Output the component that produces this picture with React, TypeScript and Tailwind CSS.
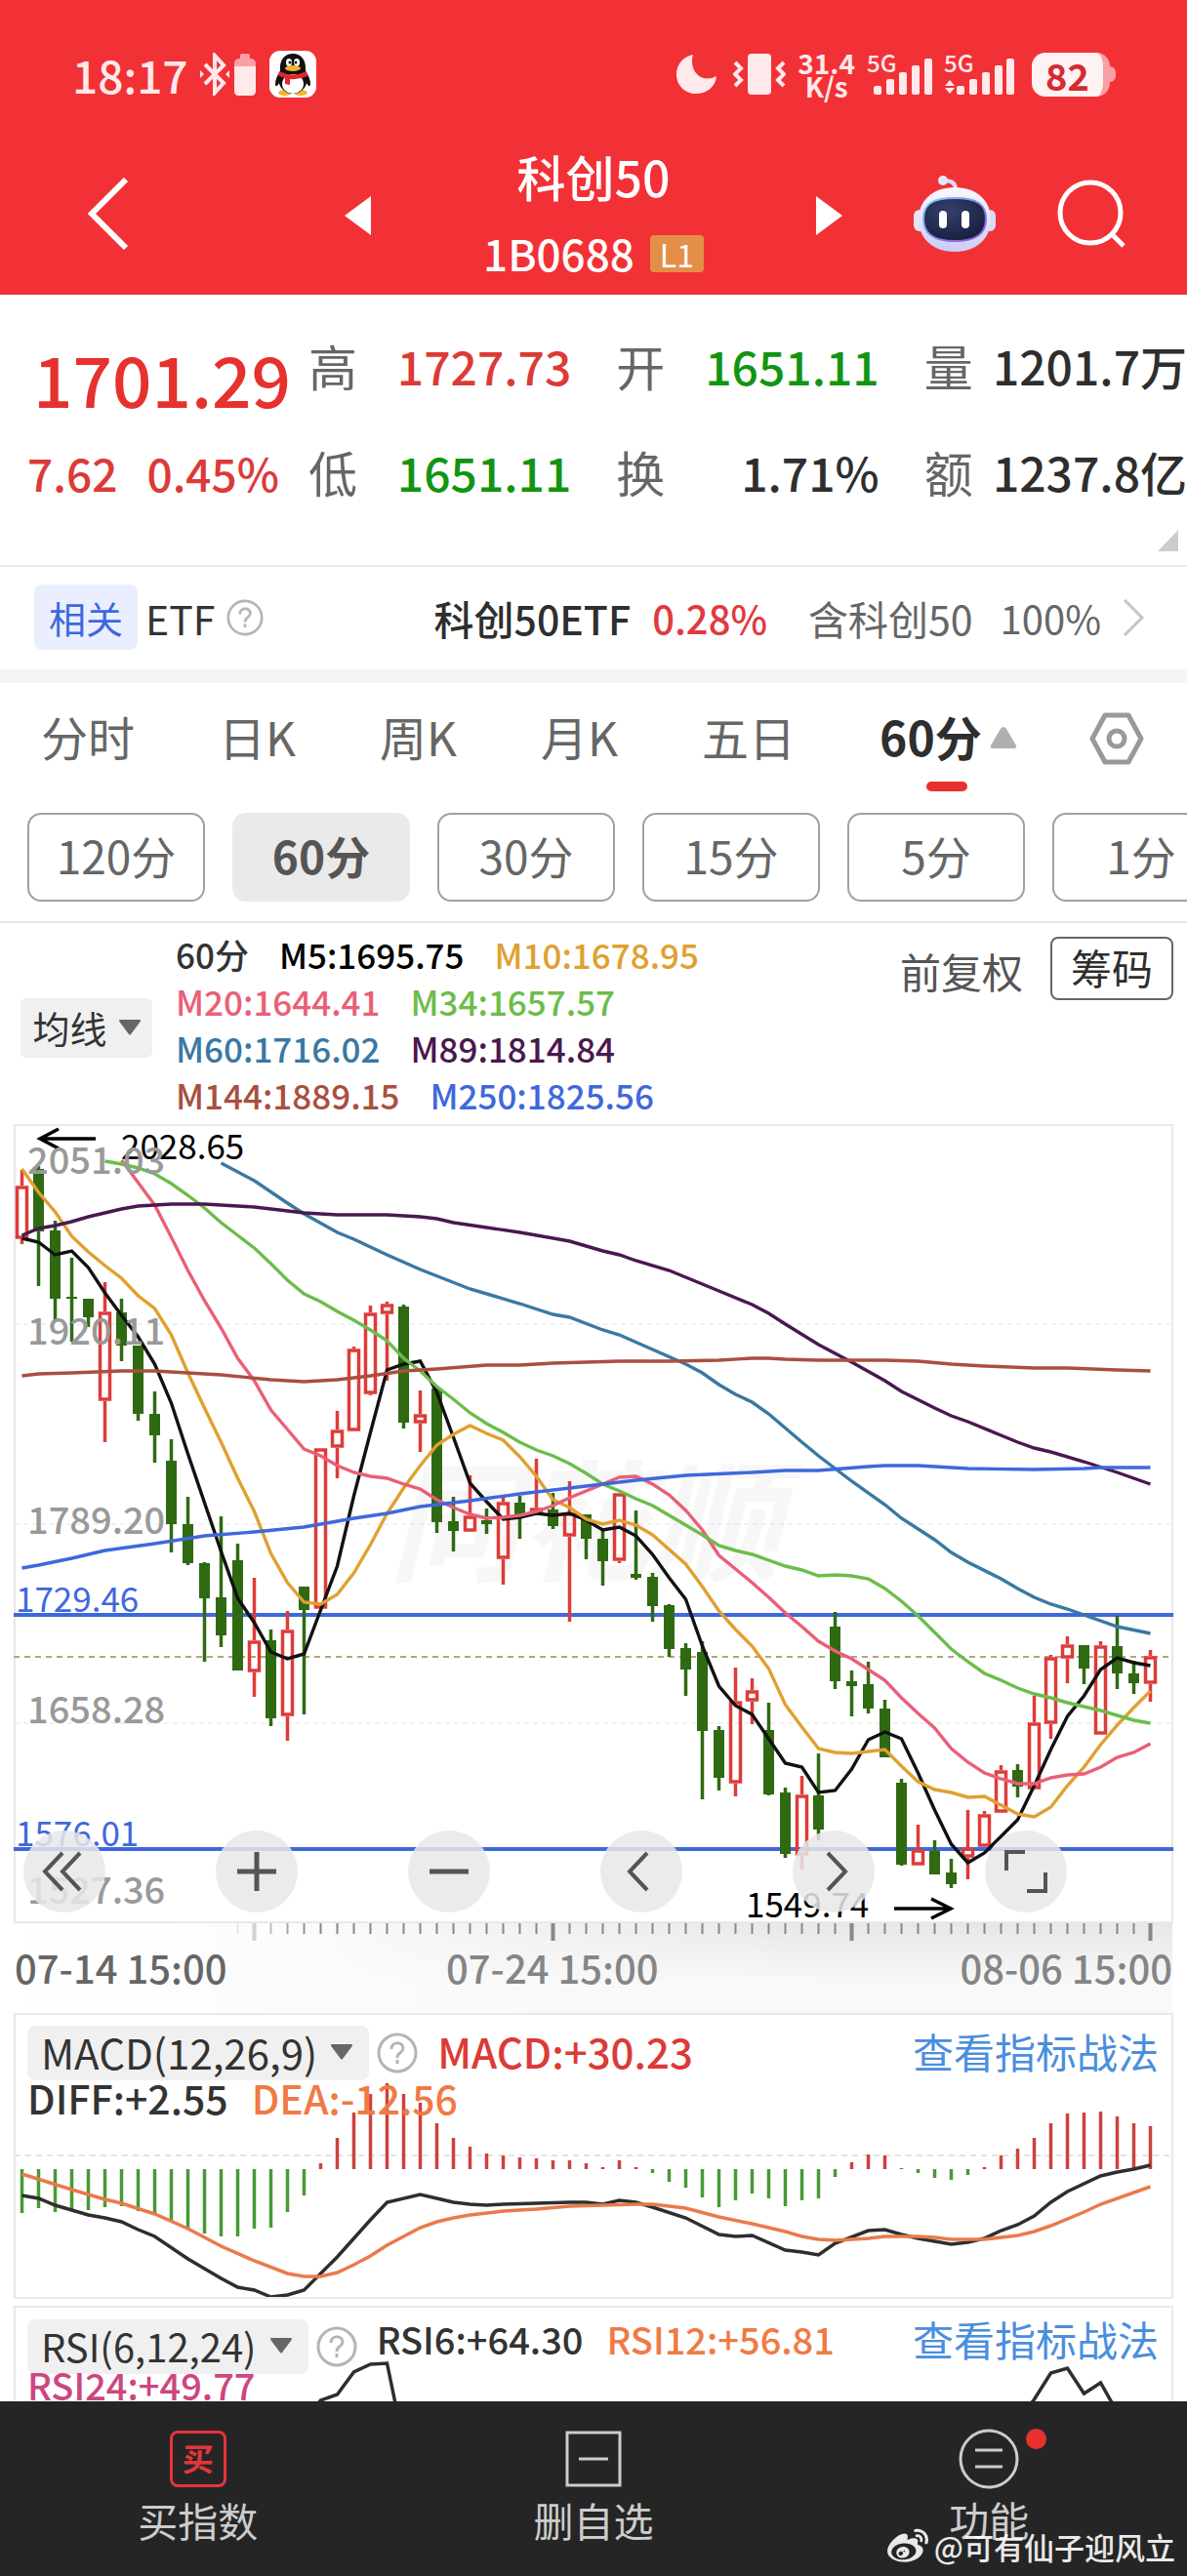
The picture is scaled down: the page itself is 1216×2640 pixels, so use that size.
import type { ReactNode } from 'react';
import { FaWeibo } from 'react-icons/fa6';

type Point = [number, number];
type Candle = ['r' | 'g', number, number, number, number];

const STEP = 17;
const x = (i: number) => 22.5 + i * STEP;

const toPoints = (pts: Point[]) => pts.map(([i, y]) => `${x(i)},${y}`).join(' ');
const dense = (start: number, ys: number[]): Point[] => ys.map((y, i) => [start + i, y]);

// direction, high, body top, body bottom, low
const candles: Candle[] = [
  ['r', 1199, 1215, 1270, 1275], ['g', 1195, 1198, 1262, 1318], ['g', 1251, 1261, 1331, 1354],
  ['g', 1289, 1329, 1331, 1375], ['g', 1331, 1331, 1350, 1360], ['r', 1314, 1344, 1436, 1478],
  ['g', 1331, 1345, 1379, 1395], ['g', 1379, 1379, 1449, 1456], ['g', 1426, 1449, 1471, 1499],
  ['g', 1475, 1497, 1562, 1591], ['g', 1534, 1562, 1602, 1604], ['g', 1601, 1602, 1638, 1703],
  ['g', 1554, 1637, 1676, 1688], ['g', 1582, 1599, 1712, 1712], ['r', 1617, 1681, 1714, 1739],
  ['g', 1670, 1681, 1761, 1769], ['r', 1651, 1670, 1759, 1784], ['g', 1626, 1626, 1650, 1757],
  ['r', 1484, 1484, 1649, 1649], ['r', 1446, 1465, 1484, 1515], ['r', 1380, 1382, 1467, 1467],
  ['r', 1338, 1345, 1429, 1430], ['r', 1334, 1336, 1347, 1415], ['g', 1337, 1339, 1458, 1464],
  ['r', 1425, 1449, 1459, 1488], ['g', 1423, 1423, 1560, 1571], ['g', 1534, 1559, 1569, 1590],
  ['r', 1512, 1553, 1570, 1570], ['g', 1546, 1558, 1562, 1572], ['r', 1532, 1539, 1598, 1624],
  ['g', 1533, 1540, 1552, 1577], ['r', 1495, 1545, 1550, 1551], ['g', 1530, 1547, 1564, 1567],
  ['r', 1518, 1550, 1575, 1662], ['g', 1552, 1552, 1577, 1598], ['g', 1568, 1577, 1600, 1625],
  ['r', 1530, 1530, 1600, 1602], ['g', 1548, 1613, 1617, 1619], ['g', 1612, 1616, 1646, 1662],
  ['g', 1644, 1645, 1690, 1698], ['g', 1684, 1689, 1711, 1738], ['g', 1682, 1693, 1774, 1844],
  ['g', 1769, 1773, 1822, 1835], ['r', 1709, 1743, 1828, 1841], ['r', 1720, 1732, 1744, 1767],
  ['g', 1745, 1773, 1839, 1840], ['g', 1832, 1837, 1900, 1904], ['r', 1820, 1839, 1902, 1916],
  ['g', 1797, 1840, 1875, 1886], ['g', 1652, 1667, 1723, 1731], ['g', 1712, 1723, 1728, 1759],
  ['g', 1703, 1726, 1751, 1756], ['g', 1742, 1751, 1801, 1801], ['g', 1823, 1827, 1911, 1912],
  ['r', 1870, 1895, 1912, 1912], ['g', 1886, 1897, 1921, 1921], ['g', 1905, 1919, 1931, 1935],
  ['r', 1855, 1893, 1904, 1926], ['r', 1856, 1859, 1893, 1893], ['r', 1809, 1814, 1858, 1858],
  ['g', 1808, 1814, 1831, 1842], ['r', 1738, 1765, 1834, 1834], ['r', 1696, 1698, 1767, 1782],
  ['r', 1677, 1685, 1700, 1725], ['g', 1686, 1686, 1710, 1726], ['r', 1682, 1686, 1778, 1778],
  ['g', 1656, 1687, 1715, 1731], ['g', 1702, 1715, 1725, 1736], ['r', 1691, 1697, 1726, 1744],
];

const averages: { name: string; color: string; points: Point[] }[] = [
  {
    name: 'M5',
    color: '#111111',
    points: dense(0, [
      1269, 1273, 1286, 1282, 1299, 1325, 1348, 1370, 1398, 1438, 1490, 1540, 1590, 1638, 1663, 1693, 1700, 1695,
      1650, 1605, 1533, 1468, 1404, 1398, 1395, 1427, 1473, 1520, 1539, 1557, 1555, 1551, 1553, 1551, 1558, 1568,
      1565, 1574, 1593, 1617, 1639, 1687, 1728, 1748, 1757, 1782, 1807, 1811, 1837, 1835, 1813, 1783, 1775, 1782,
      1817, 1855, 1890, 1909, 1899, 1882, 1865, 1830, 1793, 1759, 1738, 1711, 1699, 1704, 1707,
    ]),
  },
  {
    name: 'M10',
    color: '#e0a030',
    points: dense(0, [
      1198, 1222, 1242, 1267, 1283, 1297, 1310, 1328, 1341, 1368, 1407, 1443, 1478, 1515, 1549, 1592, 1622, 1642,
      1644, 1634, 1612, 1583, 1551, 1525, 1502, 1481, 1470, 1461, 1469, 1476, 1493, 1513, 1537, 1545, 1557, 1562,
      1558, 1563, 1573, 1588, 1603, 1626, 1651, 1670, 1687, 1710, 1747, 1770, 1792, 1796, 1797, 1795, 1793, 1810,
      1826, 1834, 1837, 1842, 1841, 1850, 1859, 1862, 1852, 1830, 1811, 1788, 1768, 1750, 1733,
    ]),
  },
  {
    name: 'M20',
    color: '#ea5f77',
    points: dense(6, [
      1189, 1212, 1235, 1268, 1302, 1333, 1361, 1392, 1415, 1445, 1465, 1485, 1492, 1502, 1509, 1513, 1515, 1521,
      1526, 1537, 1545, 1552, 1556, 1555, 1553, 1549, 1543, 1535, 1528, 1521, 1514, 1513, 1521, 1532, 1548, 1568,
      1594, 1608, 1622, 1637, 1653, 1667, 1682, 1692, 1700, 1711, 1722, 1740, 1756, 1771, 1792, 1806, 1817, 1823,
      1828, 1828, 1822, 1819, 1818, 1811, 1801, 1796, 1787,
    ]),
  },
  {
    name: 'M34',
    color: '#6cbd4a',
    points: dense(5, [
      1190, 1193, 1197, 1203, 1213, 1225, 1238, 1253, 1266, 1279, 1295, 1312, 1326, 1334, 1344, 1353, 1363, 1374,
      1392, 1405, 1421, 1434, 1448, 1459, 1468, 1478, 1486, 1492, 1500, 1510, 1521, 1528, 1536, 1543, 1553, 1563,
      1573, 1584, 1589, 1593, 1599, 1605, 1609, 1615, 1614, 1615, 1618, 1628, 1641, 1656, 1673, 1690, 1703, 1715,
      1722, 1730, 1736, 1740, 1745, 1749, 1753, 1758, 1763, 1766,
    ]),
  },
  {
    name: 'M60',
    color: '#3a78a3',
    points: [
      [12, 1192], [14, 1210], [16, 1233], [17, 1244], [19, 1263], [20, 1270], [21, 1278], [22, 1286], [24, 1301],
      [27, 1321], [30, 1336], [32, 1347], [33, 1350], [35, 1363], [36, 1368], [38, 1383], [40, 1398], [41, 1407],
      [42, 1419], [43, 1429], [44, 1437], [45, 1449], [47, 1478], [48, 1492], [50, 1518], [52, 1542], [53, 1556],
      [55, 1578], [56, 1591], [57, 1601], [59, 1618], [60, 1628], [61, 1637], [62, 1644], [63, 1649], [66, 1667],
      [68, 1674],
    ],
  },
  {
    name: 'M89',
    color: '#4a1850',
    points: [
      [0, 1266], [1, 1259], [2, 1256], [3, 1252], [4, 1247], [6, 1239], [7, 1236], [8, 1235], [9, 1234], [11, 1234],
      [14, 1237], [17, 1243], [19, 1245], [22, 1245], [24, 1247], [25, 1249], [26, 1253], [28, 1258], [30, 1263],
      [33, 1272], [35, 1282], [36, 1286], [37, 1292], [39, 1302], [41, 1316], [42, 1323], [44, 1337], [45, 1346],
      [46, 1357], [48, 1378], [50, 1396], [52, 1415], [53, 1426], [55, 1443], [56, 1451], [57, 1457], [59, 1471],
      [60, 1478], [61, 1484], [62, 1488], [64, 1498], [66, 1509], [68, 1521],
    ],
  },
  {
    name: 'M144',
    color: '#a94f40',
    points: [
      [0, 1410], [1, 1408], [3, 1407], [6, 1405], [8, 1405], [12, 1409], [15, 1414], [17, 1416], [19, 1414],
      [21, 1410], [23, 1405], [25, 1403], [28, 1399], [30, 1399], [32, 1397], [34, 1396], [36, 1395], [39, 1395],
      [42, 1394], [44, 1392], [45, 1392], [46, 1393], [48, 1394], [52, 1394], [54, 1395], [56, 1398], [58, 1400],
      [61, 1402], [63, 1402], [66, 1404], [68, 1405],
    ],
  },
  {
    name: 'M250',
    color: '#3f68dc',
    points: [
      [0, 1607], [1, 1604], [3, 1597], [5, 1589], [8, 1582], [11, 1574], [14, 1570], [17, 1565], [20, 1556],
      [22, 1551], [24, 1544], [27, 1538], [30, 1531], [34, 1523], [37, 1517], [40, 1512], [44, 1509], [46, 1507],
      [48, 1507], [51, 1503], [52, 1502], [54, 1502], [57, 1505], [61, 1506], [64, 1505], [65, 1504], [68, 1504],
    ],
  },
];

const MACD_ZERO = 2223;
const macdBars = [
  2268, 2263, 2267, 2264, 2265, 2262, 2261, 2266, 2268, 2277, 2283, 2289, 2292, 2292, 2284, 2283, 2267, 2250, 2217,
  2191, 2165, 2146, 2135, 2146, 2155, 2176, 2191, 2200, 2207, 2209, 2211, 2212, 2214, 2214, 2217, 2221, 2214, 2221,
  2227, 2236, 2242, 2252, 2262, 2255, 2248, 2253, 2261, 2255, 2253, 2231, 2216, 2208, 2209, 2222, 2227, 2232, 2234,
  2229, 2221, 2209, 2202, 2191, 2176, 2166, 2165, 2164, 2169, 2176, 2179,
];

const diffLine: Point[] = [
  [0, 2250], [1, 2253], [2, 2260], [4, 2270], [5, 2273], [6, 2277], [7, 2285], [8, 2292], [10, 2315], [12, 2335],
  [13, 2344], [14, 2347], [15, 2354], [16, 2352], [17, 2347], [18, 2330], [19, 2313], [20, 2294], [21, 2275],
  [22, 2257], [24, 2249], [25, 2253], [26, 2257], [27, 2259], [28, 2260], [29, 2259], [31, 2258], [33, 2257],
  [34, 2257], [35, 2259], [36, 2255], [37, 2257], [38, 2262], [40, 2273], [42, 2290], [43, 2292], [44, 2291],
  [46, 2306], [47, 2308], [48, 2311], [49, 2299], [51, 2286], [52, 2285], [53, 2290], [54, 2294], [56, 2300],
  [57, 2298], [58, 2294], [59, 2286], [60, 2280], [61, 2271], [62, 2257], [63, 2246], [65, 2230], [66, 2226],
  [67, 2223], [68, 2219],
];

const deaLine: Point[] = [
  [0, 2228], [3, 2244], [5, 2254], [6, 2258], [8, 2269], [10, 2284], [12, 2302], [14, 2317], [16, 2330], [17, 2333],
  [18, 2333], [19, 2329], [20, 2321], [21, 2312], [22, 2301], [23, 2292], [24, 2283], [25, 2277], [26, 2273],
  [27, 2270], [29, 2266], [31, 2264], [33, 2261], [35, 2260], [37, 2259], [38, 2259], [40, 2263], [42, 2272],
  [44, 2279], [46, 2287], [47, 2292], [48, 2295], [49, 2296], [50, 2295], [51, 2294], [52, 2292], [54, 2292],
  [55, 2293], [56, 2295], [58, 2295], [60, 2291], [61, 2287], [62, 2281], [64, 2267], [65, 2259], [68, 2241],
];

const rsiLines: Point[][] = [
  [[17.7, 2466], [18, 2460], [19, 2454], [20, 2431], [21, 2423], [22, 2422], [22.5, 2463], [22.6, 2470]],
  [[60.7, 2466], [61, 2459], [62, 2432], [63, 2427], [64, 2453], [65, 2442], [65.7, 2463], [66, 2470]],
];

const legend = [
  [['60分', 'text-[#333]'], ['M5:1695.75', 'text-black'], ['M10:1678.95', 'text-[#e0a030]']],
  [['M20:1644.41', 'text-[#ea5f77]'], ['M34:1657.57', 'text-[#6cbd4a]']],
  [['M60:1716.02', 'text-[#3a78a3]'], ['M89:1814.84', 'text-[#4a1850]']],
  [['M144:1889.15', 'text-[#a94f40]'], ['M250:1825.56', 'text-[#3f68dc]']],
];

const quotes = [
  ['高', '1727.73', 'text-[#dc3a37]'],
  ['开', '1651.11', 'text-[#129412]'],
  ['量', '1201.7万', 'text-[#2e2e2e]'],
  ['低', '1651.11', 'text-[#129412]'],
  ['换', '1.71%', 'text-[#2e2e2e]'],
  ['额', '1237.8亿', 'text-[#2e2e2e]'],
];

const scaleLabels: [string, number][] = [
  ['2051.03', 1203], ['1920.11', 1378], ['1789.20', 1572], ['1658.28', 1766], ['1527.36', 1951],
];

function Signal({ small }: { small?: boolean }) {
  return (
    <div className="relative h-11 w-[73px]">
      <span className="absolute left-0 top-0 text-[24px] leading-5 font-medium">5G</span>
      <svg viewBox="0 0 73 44" className="h-11 w-[73px] fill-current">
        {small && <path d="M1 34l5-6 5 6zM1 36l5 6 5-6z" />}
        <rect x={small ? 13 : 7} y="34" width="8" height="9" rx="2" />
        <rect x={small ? 26 : 20} y="27" width="8" height="16" rx="2" />
        <rect x={small ? 39 : 33} y="20" width="8" height="23" rx="2" />
        <rect x={small ? 52 : 46} y="13" width="8" height="30" rx="2" />
        <rect x={small ? 64 : 59} y="6" width="8" height="37" rx="2" />
      </svg>
    </div>
  );
}

function StatusBar() {
  return (
    <div className="flex h-12 items-center justify-between pl-[74px] pr-[73px] text-[#ffe9ea]">
      <div className="flex items-center">
        <span className="mr-[12px] text-[46px] leading-[48px] font-medium">18:17</span>
        <svg viewBox="0 0 30 44" className="mr-[5px] h-11 w-[30px]" fill="none" stroke="currentColor" strokeWidth="4">
          <path d="M5 12l19 19-9 10V3l9 10L5 32" />
          <path d="M0 18l4 4-4 4zM30 18l-4 4 4 4z" fill="currentColor" stroke="none" />
        </svg>
        <svg viewBox="0 0 22 44" className="mr-[14px] h-11 w-[22px]">
          <rect x="6" y="1" width="10" height="6" rx="2" fill="#f8a0a3" />
          <rect x="0" y="6" width="22" height="38" rx="5" fill="#f8a0a3" />
          <path d="M0 14h22v25q0 5-5 5H5q-5 0-5-5z" fill="currentColor" />
        </svg>
        <svg viewBox="0 0 48 48" className="size-12">
          <rect width="48" height="48" rx="11" fill="#fff" />
          <ellipse cx="16" cy="43" rx="7" ry="3" fill="#f4b52a" />
          <ellipse cx="32" cy="43" rx="7" ry="3" fill="#f4b52a" />
          <path d="M24 3c-8 0-13 6-13 14v4c-3 4-5 9-5 13 0 3 2 3 4-1 1 6 7 11 14 11s13-5 14-11c2 4 4 4 4 1 0-4-2-9-5-13v-4c0-8-5-14-13-14z" fill="#111" />
          <ellipse cx="24" cy="34" rx="11" ry="10" fill="#fff" />
          <ellipse cx="20" cy="12" rx="3" ry="4" fill="#fff" />
          <ellipse cx="28" cy="12" rx="3" ry="4" fill="#fff" />
          <circle cx="21" cy="12" r="1.5" fill="#111" />
          <circle cx="27" cy="12" r="1.5" fill="#111" />
          <ellipse cx="24" cy="18" rx="8" ry="3" fill="#f4b52a" />
          <path d="M10 21q14 7 28 0l1 5q-9 4-18 3v6l-5-1v-6q-4-1-7-3z" fill="#e3262b" />
        </svg>
      </div>
      <div className="flex items-center">
        <svg viewBox="0 0 42 42" className="mr-4 h-[42px] w-[42px] fill-current">
          <path d="M17 1C7 3 0 11 0 21c0 12 9 20 20 20 11 0 20-7 21-18C27 31 12 19 17 1z" />
        </svg>
        <svg viewBox="0 0 54 44" className="mr-[12px] h-11 w-[54px]" fill="none" stroke="currentColor" strokeWidth="4">
          <rect x="15" y="1" width="24" height="42" rx="4" fill="currentColor" stroke="none" />
          <path d="M2 10l6 6-6 6 6 6-6 6M52 10l-6 6 6 6-6 6 6 6" />
        </svg>
        <span className="mr-[12px] text-center text-[28px] leading-[24px] font-bold">
          31.4
          <br />
          K/s
        </span>
        <Signal />
        <div className="w-[6px]" />
        <Signal small />
        <div className="ml-[17px] flex items-center">
          <span className="flex h-[45px] w-[80px] items-center justify-center rounded-[14px] border-r-[7px] border-[#f8a0a3] bg-[#fff2f2] text-[38px] leading-[45px] font-bold text-[#d52b33]">
            82
          </span>
          <span className="h-4 w-[6px] rounded-r-full bg-[#f8a0a3]" />
        </div>
      </div>
    </div>
  );
}

function Robot() {
  return (
    <svg viewBox="0 0 86 78" className="h-[78px] w-[86px]">
      <defs>
        <radialGradient id="face" cx="40%" cy="30%" r="80%">
          <stop offset="0" stopColor="#35406b" />
          <stop offset="1" stopColor="#141c3b" />
        </radialGradient>
        <linearGradient id="shell" x1="0" y1="0" x2="0" y2="1">
          <stop offset="0" stopColor="#fbf8ff" />
          <stop offset="1" stopColor="#cbcdf4" />
        </linearGradient>
        <linearGradient id="rim" x1="0" y1="0" x2="1" y2="1">
          <stop offset="0" stopColor="#7fd0f0" />
          <stop offset="1" stopColor="#8a4be0" />
        </linearGradient>
      </defs>
      <path d="M44 14q0-9-12-9" fill="none" stroke="#dcdcf8" strokeWidth="4" />
      <circle cx="31" cy="5" r="5" fill="#e9e6fb" />
      <rect x="1" y="35" width="12" height="22" rx="6" fill="#e4e4fb" />
      <rect x="73" y="35" width="12" height="22" rx="6" fill="#d6d8f7" />
      <path d="M43 12c23 0 37 14 37 33S66 78 43 78 6 64 6 45s14-33 37-33z" fill="url(#shell)" />
      <path d="M43 23c24 0 32 7 32 21s-8 23-32 23-32-9-32-23 8-21 32-21z" fill="url(#face)" stroke="url(#rim)" strokeWidth="2" />
      <rect x="27" y="36" width="8" height="18" rx="4" fill="#fff" />
      <rect x="50" y="36" width="8" height="18" rx="4" fill="#fff" />
    </svg>
  );
}

function Header() {
  return (
    <header className="bg-[#f23136] pt-[52px] pb-[22px] text-white">
      <StatusBar />
      <div className="mt-[40px] grid h-[140px] grid-cols-[1fr_456px_1fr] items-center">
        <div className="flex items-center justify-between pl-[90px]">
          <button aria-label="返回">
            <svg viewBox="0 0 42 74" className="h-[74px] w-[42px]" fill="none" stroke="currentColor" strokeWidth="6">
              <path d="M39 2L4 37l35 35" />
            </svg>
          </button>
          <button aria-label="上一个">
            <svg viewBox="0 0 27 40" className="mt-1 h-10 w-[27px] fill-current">
              <path d="M27 0v40L0 20z" />
            </svg>
          </button>
        </div>
        <div className="self-start text-center font-medium">
          <h1 className="text-[50px] leading-[80px] font-medium">科创50</h1>
          <div className="flex h-[78px] items-center justify-center gap-4 text-[44px] leading-[78px]">
            1B0688
            <span className="mt-[2px] rounded-[4px] bg-[#e48f48] px-[10px] text-[32px] leading-[38px] font-normal">L1</span>
          </div>
        </div>
        <div className="flex items-center justify-between pr-[62px]">
          <button aria-label="下一个">
            <svg viewBox="0 0 27 40" className="mt-1 h-10 w-[27px] fill-current">
              <path d="M0 0v40l27-20z" />
            </svg>
          </button>
          <button aria-label="助手" className="ml-[10px]">
            <Robot />
          </button>
          <button aria-label="搜索">
            <svg viewBox="0 0 72 72" className="size-[72px]" fill="none" stroke="currentColor" strokeWidth="5">
              <circle cx="35" cy="35" r="31" />
              <path d="M57 57l12 12" />
            </svg>
          </button>
        </div>
      </div>
    </header>
  );
}

function Quote() {
  return (
    <section className="relative grid h-[279px] grid-cols-[270px_1fr] gap-x-[46px] border-b-2 border-[#ececec] text-[48px] text-[#dc3a37]">
      <div className="pt-[20px] whitespace-nowrap">
        <div className="pl-[34px] text-[71px] leading-[130px] font-medium text-[#e6312e]">1701.29</div>
        <div className="flex justify-between pl-[28px] text-[46px] leading-[64px] font-medium">
          <span>7.62</span>
          <span className="-mr-4">0.45%</span>
        </div>
      </div>
      <dl className="grid auto-rows-[109px] grid-cols-3 gap-x-[46px] pt-[18px] whitespace-nowrap leading-[109px]">
        {quotes.map(([label, value, color]) => (
          <div key={label} className="flex justify-between">
            <dt className="text-[50px] text-[#666]">{label}</dt>
            <dd className={`font-medium ${color}`}>{value}</dd>
          </div>
        ))}
      </dl>
      <svg viewBox="0 0 21 22" className="absolute right-[9px] bottom-[14px] h-[22px] w-[21px] fill-[#ccc]">
        <path d="M21 0v22H0z" />
      </svg>
    </section>
  );
}

function Help({ className }: { className?: string }) {
  return (
    <button aria-label="说明" className={className}>
      <svg viewBox="0 0 42 42" className="size-full" fill="none" stroke="#b5b5b5" strokeWidth="3">
        <circle cx="21" cy="21" r="19" />
        <path d="M15 17c0-8 12-8 12-1 0 5-6 4-6 10M21 28v4" />
      </svg>
    </button>
  );
}

function Related() {
  return (
    <section className="flex h-[119px] items-center border-b-[14px] border-[#f4f4f4] pb-[2px] pl-[35px] pr-[44px] text-[41px] leading-[60px] whitespace-nowrap text-[#666]">
      <span className="rounded-[8px] bg-[#eaefff] px-[15px] text-[38px] leading-[67px] text-[#3d68dd]">相关</span>
      <span className="ml-2 text-[#333]">ETF</span>
      <Help className="ml-3 size-[38px]" />
      <a href="#etf" className="ml-auto flex items-center">
        <span className="font-medium text-[#2e2e2e]">科创50ETF</span>
        <span className="ml-[22px] text-[40px] font-medium text-[#e03a40]">0.28%</span>
        <span className="ml-[42px]">含科创50</span>
        <span className="ml-7 text-[40px]">100%</span>
        <svg viewBox="0 0 22 38" className="ml-[22px] h-[38px] w-[22px]" fill="none" stroke="#c4c4c4" strokeWidth="3">
          <path d="M2 1l18 18L2 37" />
        </svg>
      </a>
    </section>
  );
}

function Tabs() {
  return (
    <nav className="flex h-[124px] items-start gap-[86px] pl-[42px] pr-[41px] pt-[22px] text-[48px] leading-[64px] whitespace-nowrap text-[#666]">
      <button>分时</button>
      <button>日K</button>
      <button>周K</button>
      <button>月K</button>
      <button>五日</button>
      <button className="relative flex items-center gap-2 font-bold text-[#2e2e2e]">
        60分
        <svg viewBox="0 0 28 22" className="mt-1 h-[22px] w-7 fill-[#b0b0b0]">
          <path d="M14 0q2 0 3 2l10 17q1 3-2 3H3q-3 0-2-3L11 2q1-2 3-2z" />
        </svg>
        <span className="absolute bottom-[-25px] left-[48px] h-[10px] w-[42px] rounded-full bg-[#e8312f]" />
      </button>
      <button aria-label="设置" className="-ml-3 mt-[8px]">
        <svg viewBox="0 0 56 54" className="h-[54px] w-14" fill="none" stroke="#999" strokeWidth="5" strokeLinejoin="round">
          <path d="M16 3h24l13 24-13 24H16L3 27z" />
          <circle cx="28" cy="27" r="8" />
        </svg>
      </button>
    </nav>
  );
}

const periods = ['120分', '60分', '30分', '15分', '5分', '1分'];

function Periods() {
  return (
    <div className="flex gap-7 overflow-hidden border-b-2 border-[#e6e6e6] pt-[9px] pb-[20px] pl-7">
      {periods.map((p) => (
        <button
          key={p}
          className={
            p === '60分'
              ? 'h-[91px] w-[182px] shrink-0 rounded-[14px] bg-[#eaeaea] pb-1 text-[46px] font-bold text-[#555]'
              : 'h-[91px] w-[182px] shrink-0 rounded-[14px] border-2 border-[#a0a0a0] pb-1 text-[46px] text-[#666]'
          }
        >
          {p}
        </button>
      ))}
    </div>
  );
}

function Down() {
  return (
    <svg viewBox="0 0 22 16" className="h-4 w-[22px] fill-[#666]">
      <path d="M1 0h20q2 0 0 3l-9 12q-1 1-2 0L1 3Q-1 0 1 0z" />
    </svg>
  );
}

function Legend() {
  return (
    <div className="flex h-[206px] pl-[21px] pr-[14px] whitespace-nowrap">
      <button className="mt-[77px] flex h-[61px] w-[135px] items-center justify-center gap-3 rounded-[6px] bg-[#f0f0f0] pb-[2px] text-[38px] text-[#333]">
        均线
        <Down />
      </button>
      <div className="ml-6 pt-[8px] text-[35px] leading-[48px] font-medium">
        {legend.map((row, i) => (
          <div key={i} className="flex gap-[31px]">
            {row.map(([text, color]) => (
              <span key={text} className={color}>{text}</span>
            ))}
          </div>
        ))}
      </div>
      <button className="ml-auto mt-[16px] h-[64px] text-[42px] text-[#555]">前复权</button>
      <button className="ml-[28px] mt-[14px] h-[65px] w-[126px] rounded-[8px] border-2 border-[#666] pb-1 text-[42px] leading-[58px] text-[#2e2e2e]">
        筹码
      </button>
    </div>
  );
}

function Round({ label, children }: { label: string; children: ReactNode }) {
  return (
    <button aria-label={label} className="size-[84px] rounded-full bg-[#e8e8e8]/85">
      <svg viewBox="0 0 84 84" className="size-full" fill="none" stroke="#555" strokeWidth="4">
        {children}
      </svg>
    </button>
  );
}

function KLine() {
  return (
    <section className="relative">
      <svg viewBox="0 1152 1216 911" className="block w-full">
        <defs>
          <linearGradient id="axis" x1="0" y1="0" x2="1" y2="0">
            <stop offset="0" stopColor="#fff" />
            <stop offset="0.45" stopColor="#f9f9f9" />
            <stop offset="1" stopColor="#f9f9f9" />
          </linearGradient>
          <linearGradient id="shade" x1="0" y1="0" x2="0" y2="1">
            <stop offset="0" stopColor="#e6e6e6" />
            <stop offset="1" stopColor="#e6e6e6" stopOpacity="0" />
          </linearGradient>
          <linearGradient id="fade" x1="0" y1="0" x2="1" y2="0">
            <stop offset="0.25" stopColor="#fff" stopOpacity="0" />
            <stop offset="0.7" stopColor="#fff" />
          </linearGradient>
          <mask id="shadeMask">
            <rect x="15" y="1971" width="1186" height="60" fill="url(#fade)" />
          </mask>
        </defs>
        <text x="398" y="1610" fontSize="134" fontWeight="700" fontStyle="italic" fill="#f7f7f7">同花顺</text>
        <rect x="15" y="1153" width="1186" height="817" fill="none" stroke="#e9e9e9" strokeWidth="2" />
        <g stroke="#e2e2e2" strokeWidth="1" strokeDasharray="5 4">
          <path d="M15 1357H1201M15 1562H1201M15 1766H1201" />
        </g>
        <path d="M14 1698H1202" stroke="#b3a678" strokeWidth="2" strokeDasharray="6 5" />
        <path d="M14 1655H1202M14 1895H1202" stroke="#3f68dc" strokeWidth="4" />

        {candles.map(([dir, high, top, bottom, low], i) =>
          dir === 'g' ? (
            <g key={i} fill="#2f6a12">
              <rect x={x(i) - 1.75} y={high} width="3.5" height={low - high} />
              <rect x={x(i) - 5.5} y={top} width="11" height={Math.max(bottom - top, 2)} />
            </g>
          ) : (
            <g key={i} stroke="#dd3c39" strokeWidth="3.5" fill="none">
              <path d={`M${x(i)} ${high}V${top}M${x(i)} ${bottom}V${low}`} />
              <rect x={x(i) - 5} y={top + 2} width="10" height={Math.max(bottom - top - 4, 2)} />
            </g>
          ),
        )}

        {averages.map((line) => (
          <polyline key={line.name} points={toPoints(line.points)} fill="none" stroke={line.color} strokeWidth="3.4" />
        ))}

        <g stroke="#000" strokeWidth="3.5" fill="none">
          <path d="M98 1167H41M60 1157L41 1167L60 1177" />
          <path d="M916 1956H974M954 1946L974 1956L954 1966" />
        </g>
        <g fontSize="35">
          <text x="124" y="1188">2028.65</text>
          <text x="764" y="1965">1549.74</text>
          <text x="16" y="1652" fill="#3f68dc">1729.46</text>
          <text x="16" y="1892" fill="#3f68dc">1576.01</text>
        </g>
        <g fontSize="38" fontWeight="500" fill="#999">
          {scaleLabels.map(([text, y]) => (
            <text key={text} x="28" y={y}>{text}</text>
          ))}
        </g>

        <rect x="15" y="1971" width="1186" height="92" fill="url(#axis)" />
        <rect x="15" y="1971" width="1186" height="60" fill="url(#shade)" mask="url(#shadeMask)" />
        {candles.map((_, i) => {
          const major = (i - 14) % 18 === 0;
          if (i < 13) return null;
          return (
            <rect
              key={i}
              x={x(i) - (major ? 2 : 1)}
              y="1971"
              width={major ? 4 : 2}
              height={major ? 18 : 11}
              fill="#888"
              opacity={Math.min(1, (i - 12) * 0.18)}
            />
          );
        })}
        <g fontSize="40" fontWeight="500" fill="#858585">
          <text x="15" y="2033" fill="#666">07-14 15:00</text>
          <text x="457" y="2033">07-24 15:00</text>
          <text x="1201" y="2033" textAnchor="end">08-06 15:00</text>
        </g>
      </svg>
      <div className="absolute top-[724px] left-6 flex gap-[113px]">
        <Round label="最左">
          <path d="M40 23L22 42l18 19M58 23L40 42l18 19" />
        </Round>
        <Round label="放大">
          <path d="M42 22v40M22 42h40" strokeWidth="5" />
        </Round>
        <Round label="缩小">
          <path d="M22 42h40" strokeWidth="5" />
        </Round>
        <Round label="左移">
          <path d="M48 23L30 42l18 19" />
        </Round>
        <Round label="右移">
          <path d="M36 23l18 19-18 19" />
        </Round>
        <Round label="全屏">
          <path d="M22 41V22h19M62 43v19H43" />
        </Round>
      </div>
    </section>
  );
}

function IndicatorHead({ name, children }: { name: string; children: ReactNode }) {
  return (
    <div className="relative flex">
      <button className="flex h-14 items-center gap-[14px] rounded-[8px] bg-[#f0f0f0] pb-[2px] pl-[14px] pr-[17px]">
        {name}
        <Down />
      </button>
      <Help className="ml-2 mt-[7px] size-[42px]" />
      {children}
    </div>
  );
}

function Macd() {
  return (
    <section className="relative mx-[14px] h-[293px] border-2 border-[#e9e9e9] pt-[11px] pl-3 pr-[13px] text-[42px] leading-[52px] whitespace-nowrap text-[#333]">
      <svg viewBox="16 2065 1184 289" preserveAspectRatio="none" className="absolute inset-0 size-full">
        <path d="M15 2209H1201" stroke="#e4e4e4" strokeWidth="2" strokeDasharray="6 5" />
        {macdBars.map((y, i) => (
          <path key={i} d={`M${x(i)} ${MACD_ZERO}V${y}`} stroke={y > MACD_ZERO ? '#479a35' : '#cc423f'} strokeWidth="3.5" />
        ))}
        <polyline points={toPoints(diffLine)} fill="none" stroke="#2e2e2e" strokeWidth="3.5" />
        <polyline points={toPoints(deaLine)} fill="none" stroke="#ea7a4b" strokeWidth="3.5" />
      </svg>
      <IndicatorHead name="MACD(12,26,9)">
        <span className="ml-5 font-medium text-[#dc3a37]">MACD:+30.23</span>
        <a href="#macd" className="ml-auto text-[#4a8ede]">查看指标战法</a>
      </IndicatorHead>
      <div className="relative -mt-1 flex gap-6 text-[41px] leading-[42px] font-medium">
        <span>DIFF:+2.55</span>
        <span className="text-[#f07a45]">DEA:-12.56</span>
      </div>
    </section>
  );
}

function Rsi() {
  return (
    <section className="relative mx-[14px] mt-[7px] h-[98px] overflow-hidden border-2 border-b-0 border-[#e9e9e9] pt-[12px] pl-3 pr-[13px] text-[40px] leading-[40px] whitespace-nowrap text-[#333]">
      <svg viewBox="16 2365 1184 96" preserveAspectRatio="none" className="absolute inset-0 size-full">
        {rsiLines.map((line, i) => (
          <polyline key={i} points={toPoints(line)} fill="none" stroke="#2e2e2e" strokeWidth="3.5" />
        ))}
      </svg>
      <IndicatorHead name="RSI(6,12,24)">
        <span className="ml-5 text-[38px] font-medium">RSI6:+64.30</span>
        <span className="ml-6 text-[38px] font-medium text-[#f07a45]">RSI12:+56.81</span>
        <a href="#rsi" className="ml-auto text-[42px] text-[#4a8ede]">查看指标战法</a>
      </IndicatorHead>
      <div className="relative -mt-2 text-[38px] leading-[38px] font-medium text-[#cc4680]">RSI24:+49.77</div>
    </section>
  );
}

function BottomBar() {
  return (
    <footer className="relative mt-auto grid h-[179px] grid-cols-3 bg-[#252525] text-[41px] leading-[60px] text-[#ccc]">
      <button className="flex flex-col items-center pt-[30px]">
        <span className="flex size-[58px] items-center justify-center rounded-[8px] border-[3px] border-[#e5353b] pb-1 text-[32px] leading-[48px] font-bold text-[#e5353b]">
          买
        </span>
        <span className="mt-[3px]">买指数</span>
      </button>
      <button className="flex flex-col items-center pt-[30px]">
        <svg viewBox="0 0 58 58" className="size-[58px]" fill="none" stroke="currentColor" strokeWidth="3">
          <path d="M2 2h54v54H2zM14 29h30" />
        </svg>
        <span className="mt-[3px]">删自选</span>
      </button>
      <button className="flex flex-col items-center pt-[28px]">
        <span className="relative">
          <svg viewBox="0 0 62 62" className="size-[62px]" fill="none" stroke="currentColor" strokeWidth="3">
            <circle cx="31" cy="31" r="29" />
            <path d="M17 22h28M17 39h28" />
          </svg>
          <span className="absolute top-0 -right-7 size-[21px] rounded-full bg-[#e8312f]" />
        </span>
        <span>功能</span>
      </button>
      <div className="absolute right-3 bottom-[8px] flex items-center gap-[6px] text-[31px] leading-[44px] font-medium text-white/90">
        <FaWeibo className="size-[42px]" />
        @可有仙子迎风立
      </div>
    </footer>
  );
}

export default function App() {
  return (
    <div className="flex min-h-screen flex-col overflow-hidden bg-white font-['Noto_Sans_CJK_SC','Roboto',sans-serif]">
      <Header />
      <Quote />
      <Related />
      <Tabs />
      <Periods />
      <Legend />
      <KLine />
      <Macd />
      <Rsi />
      <BottomBar />
    </div>
  );
}
